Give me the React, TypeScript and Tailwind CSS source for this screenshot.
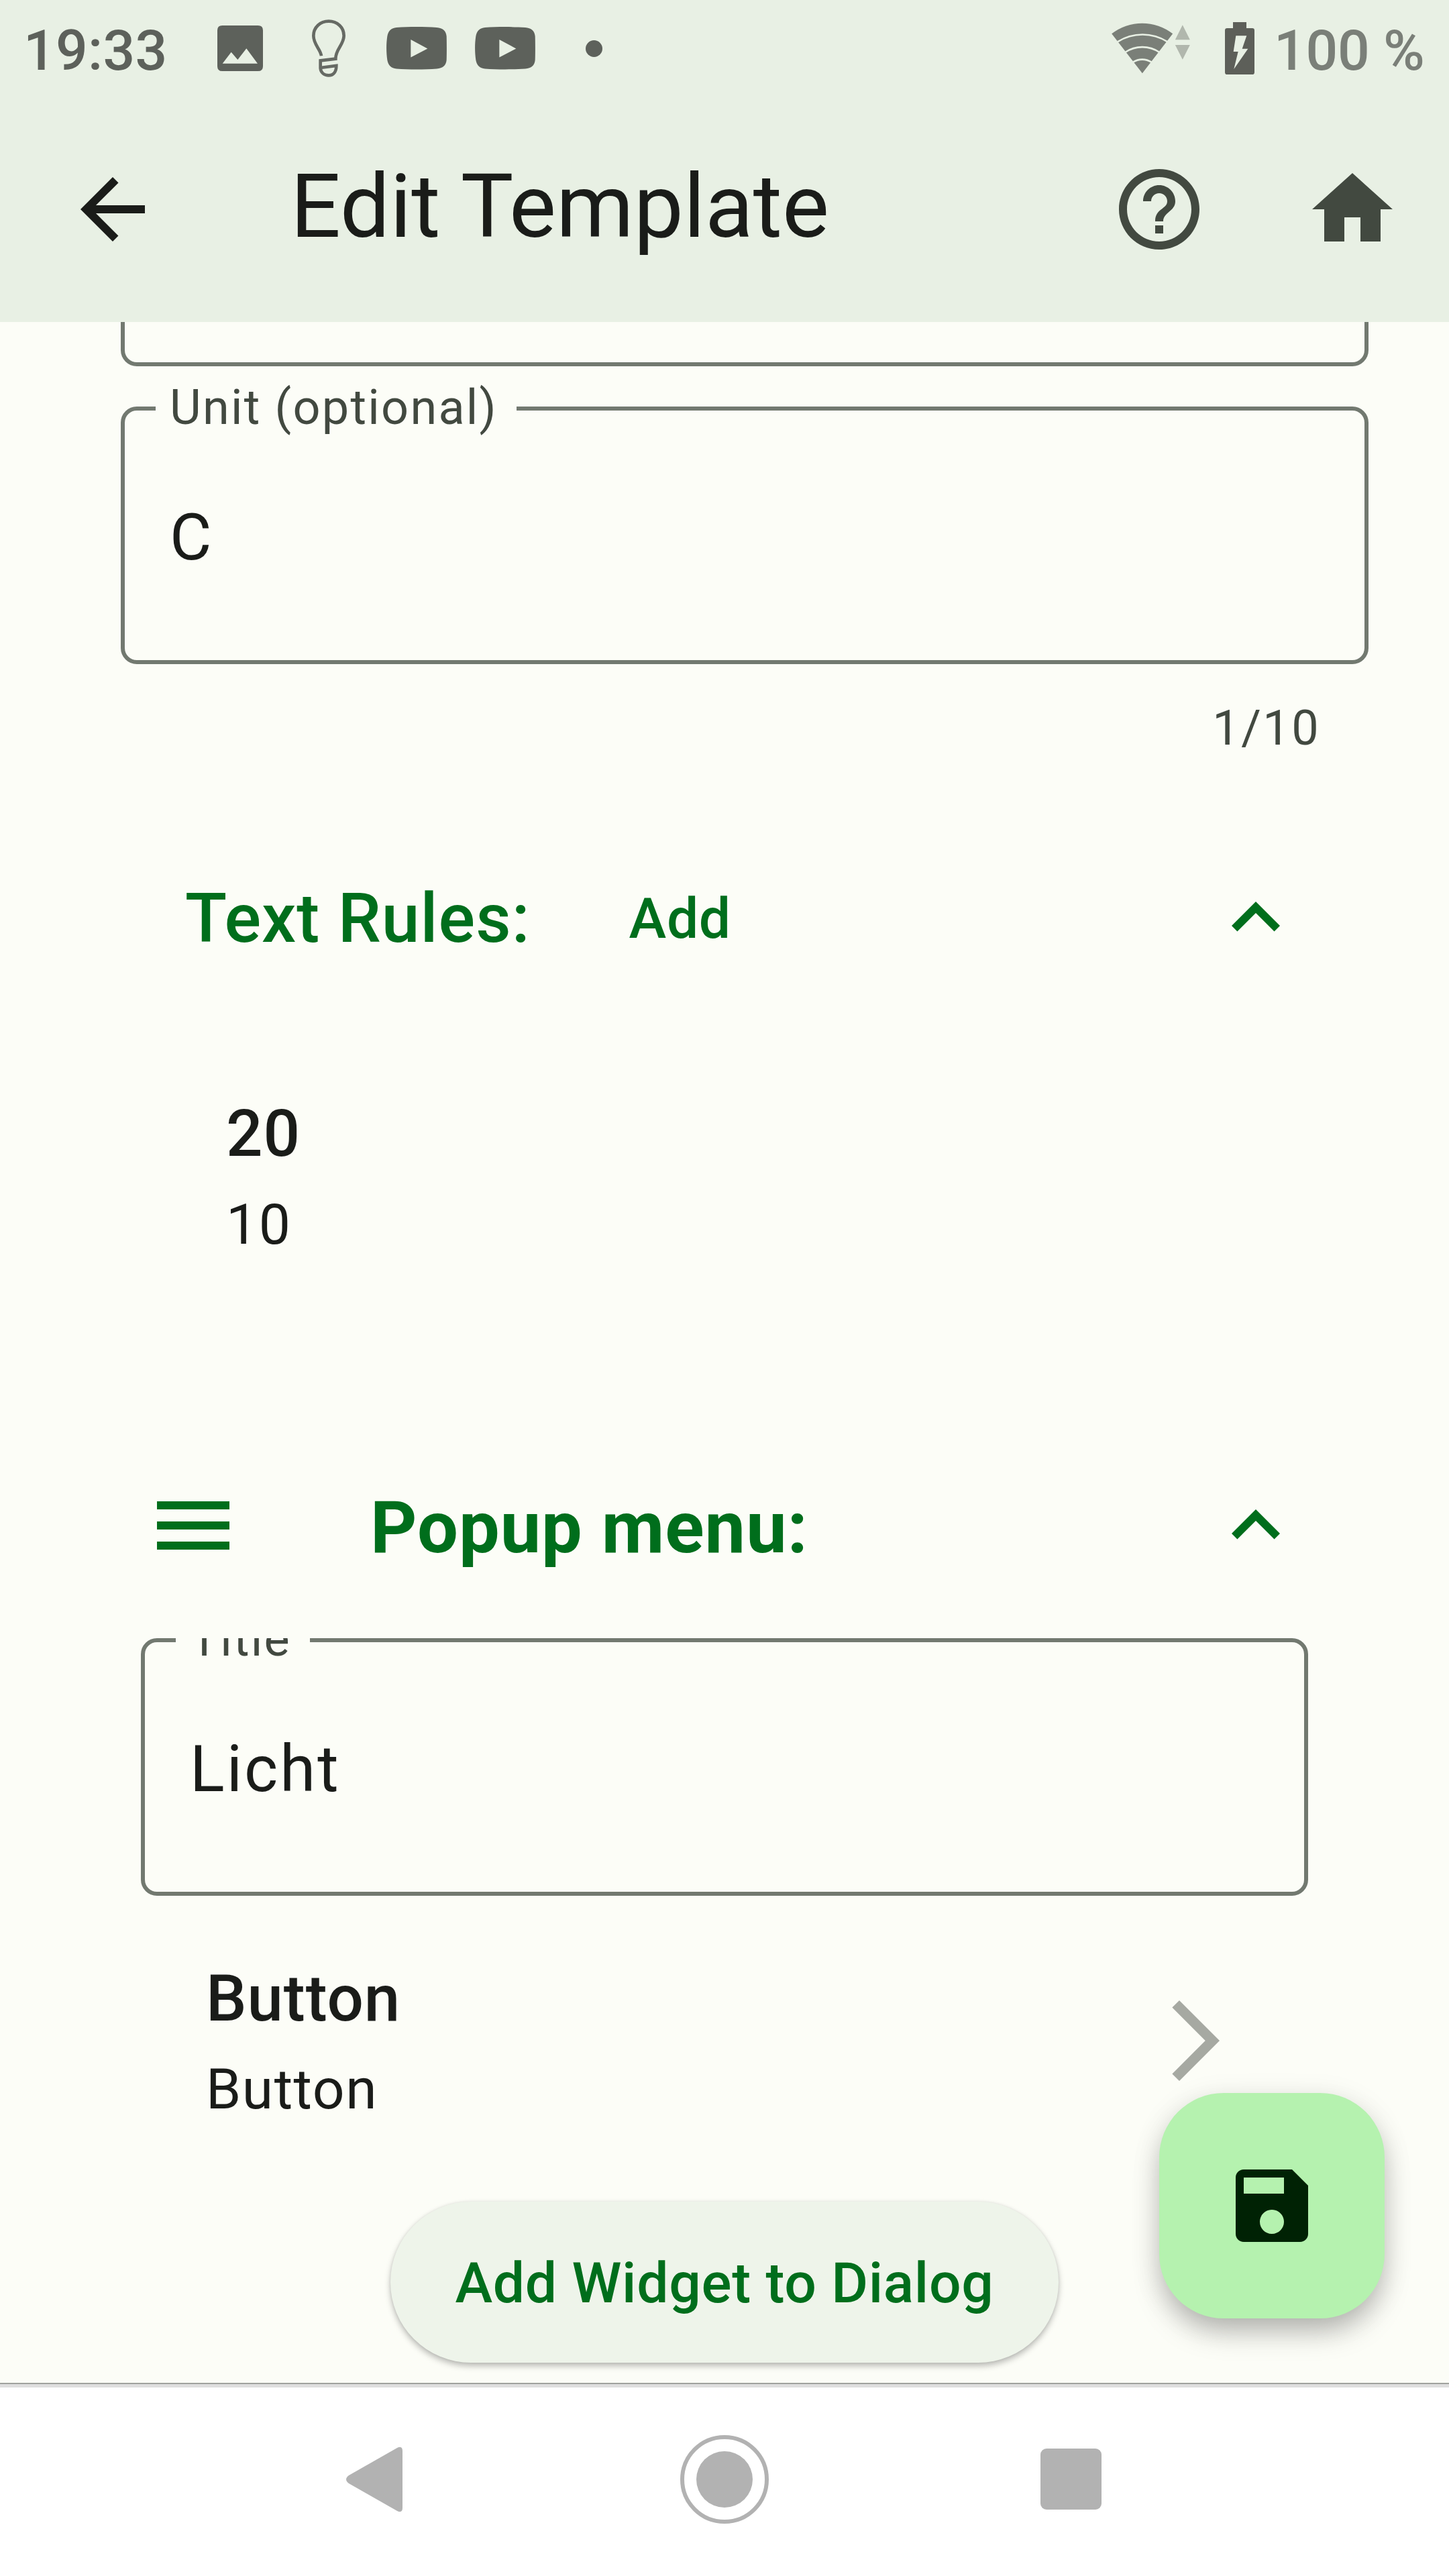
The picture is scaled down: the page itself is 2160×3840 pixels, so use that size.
import React from 'react';

type IconProps = { d: string; className?: string };

/* 24-unit material glyph */
function Icon({ d, className = '' }: IconProps) {
  return (
    <svg viewBox="0 0 24 24" fill="currentColor" className={`size-36 shrink-0 ${className}`}>
      <path d={d} />
    </svg>
  );
}

const ARROW_BACK = 'M20 11H7.83l5.59-5.59L12 4l-8 8 8 8 1.41-1.41L7.83 13H20v-2z';
const HELP =
  'M11 18h2v-2h-2v2zm1-16C6.48 2 2 6.48 2 12s4.48 10 10 10 10-4.48 10-10S17.52 2 12 2zm0 18c-4.41 0-8-3.59-8-8s3.59-8 8-8 8 3.59 8 8-3.59 8-8 8zm0-14c-2.21 0-4 1.79-4 4h2c0-1.1.9-2 2-2s2 .9 2 2c0 2-3 1.75-3 5h2c0-2.25 3-2.5 3-5 0-2.21-1.79-4-4-4z';
const HOME = 'M10 20v-6h4v6h5v-8h3L12 3 2 12h3v8z';
const EXPAND_LESS = 'M12 8l-6 6 1.41 1.41L12 10.83l4.59 4.58L18 14z';
const MENU = 'M3 18h18v-2H3v2zm0-5h18v-2H3v2zm0-7v2h18V6H3z';
const FORWARD = 'M6.23 20.23L8 22l10-10L8 2 6.23 3.77 14.46 12z';
const SAVE =
  'M17 3H5c-1.11 0-2 .9-2 2v14c0 1.1.89 2 2 2h14c1.1 0 2-.9 2-2V7l-4-4zm-5 16c-1.66 0-3-1.34-3-3s1.34-3 3-3 3 1.34 3 3-1.34 3-3 3zm3-10H5V5h10v4z';

function VideoIcon({ className = '' }: { className?: string }) {
  return (
    <svg viewBox="0 0 270 190" className={`h-[63.5px] w-[90px] shrink-0 ${className}`}>
      <path
        fill="#5d615b"
        fillRule="evenodd"
        d="M45 3C100-1 170-1 225 3C252 5 267 18 269 42C270 75 270 115 269 148C267 172 252 185 225 187C170 191 100 191 45 187C22 185 8 172 4 148C-1 115-1 75 4 42C8 18 22 5 45 3ZM109 57V136L184 97Z"
      />
    </svg>
  );
}

function StatusBar() {
  return (
    <div className="flex h-36 items-center pl-[35px] pr-[33px] text-[84px] leading-[98px] font-medium text-[#5d615b]">
      <span className="mt-[7px] w-[289px] tracking-[0.3px]">19:33</span>
      <svg viewBox="0 0 204 204" className="size-[68px]">
        <path
          fill="#5d615b"
          fillRule="evenodd"
          d="M22 0H182Q204 0 204 22V182Q204 204 182 204H22Q0 204 0 182V22Q0 0 22 0ZM23 170H180L130 103L91 153L62 119Z"
        />
      </svg>
      <svg viewBox="495 27 150 258" className="ml-[73px] h-[86px] w-[50px]" fill="none" stroke="#666a64" strokeWidth="14">
        <path d="M537 190C534 160 502 140 502 100C502 62 532 35 570 35C608 35 638 62 638 100C638 140 600 160 601 203L533 211V245C535 265 550 277 570 277C590 277 604 262 604 234L533 243" />
      </svg>
      <VideoIcon className="ml-[61px]" />
      <VideoIcon className="ml-[42px]" />
      <span className="ml-[75px] size-[25px] rounded-full bg-[#5d615b]" />

      <svg viewBox="52 36 350 234" className="mr-[52px] ml-auto h-[78px] w-[117px]">
        <path fill="#7a7f78" d="M189 265L52 88A222 222 0 0 1 325 88Z" />
        <g fill="none" stroke="#e8f0e4" strokeWidth="8">
          <path d="M78 124A209 209 0 0 1 302 124" />
          <path d="M112 171A137 137 0 0 1 266 171" />
          <path d="M147 215A77 77 0 0 1 230 215" />
        </g>
        <path fill="#b1b7ad" d="M369 49L402 115H336ZM336 138H402L369 203Z" />
      </svg>
      <svg viewBox="558 36 132 234" className="h-[78px] w-[44px]">
        <path
          fill="#5d5f59"
          fillRule="evenodd"
          d="M594 36H654V63H680Q690 63 690 73V260Q690 270 680 270H568Q558 270 558 260V73Q558 63 568 63H594ZM607 97L596 168H617L598 246L661 155H635L655 97Z"
        />
      </svg>
      <span className="mt-[7px] ml-[29px] w-[228px] tracking-[-0.3px] whitespace-nowrap text-[#7a7f78]">100 %</span>
    </div>
  );
}

function AppBar() {
  return (
    <div className="flex h-84 items-center pr-[72px] pl-24 text-[#424940]">
      <Icon d={ARROW_BACK} className="text-[#1a1c19]" />
      <h1 className="mb-[8px] ml-[193px] text-[132px] leading-[154px] text-[#1a1c19]">Edit Template</h1>
      <Icon d={HELP} className="ml-auto" />
      <Icon d={HOME} className="ml-36" />
    </div>
  );
}

function OutlinedField({ label, value, notch }: { label: string; value: string; notch: string }) {
  return (
    <div className="relative flex h-96 items-center rounded-3xl border-6 border-[#727970] px-[67px]">
      <span
        className={`absolute top-[-40px] left-[46px] bg-[#fcfdf7] pl-[21px] text-[72px] leading-[72px] tracking-[2.25px] whitespace-nowrap text-[#424940] ${notch}`}
      >
        {label}
      </span>
      <span className="mt-[6px] text-[96px] leading-[112px] tracking-[3px]">{value}</span>
    </div>
  );
}

function NavBar() {
  return (
    <div className="flex h-72 items-center border-t-2 border-[#a0a29e] bg-white pb-[3px] pl-[516px] shadow-[inset_0_5px_0_#dedede]">
      <svg viewBox="0 0 84 98" className="h-[98px] w-[84px]">
        <path fill="#b2b2b2" d="M4 43L76 2Q84-2 84 7V91Q84 100 76 96L4 55Q-4 49 4 43Z" />
      </svg>
      <div className="ml-[414px] flex size-[132px] items-center justify-center rounded-full border-6 border-[#b2b2b2]">
        <span className="size-[84px] rounded-full bg-[#b2b2b2]" />
      </div>
      <span className="ml-[405px] size-[91px] rounded-[9px] bg-[#b2b2b2]" />
    </div>
  );
}

export default function App() {
  return (
    <div className="flex h-[3840px] w-[2160px] flex-col overflow-hidden bg-[#fcfdf7] font-[Roboto,sans-serif] text-[#1a1c19]">
      <header className="h-[480px] shrink-0 bg-[#e8f0e4]">
        <StatusBar />
        <AppBar />
      </header>

      <main className="relative h-[3072px] shrink-0 overflow-hidden">
        <section className="pr-[120px] pl-[180px]">
          <div className="h-[66px] rounded-b-3xl border-6 border-t-0 border-[#727970]" />
          <div className="mt-[60px]">
            <OutlinedField label="Unit (optional)" value="C" notch="w-[538px]" />
          </div>
          <p className="mt-[60px] pr-[72px] text-right text-[72px] leading-[72px] tracking-[2.4px] text-[#424940]">1/10</p>
        </section>

        <section className="pr-[216px] pl-[276px]">
          <div className="mt-[174px] flex h-36 items-center text-[#006e1c]">
            <h2 className="mt-[2px] text-[102px] leading-[120px] font-medium tracking-[1px]">Text Rules:</h2>
            <button className="mt-[3px] ml-[147px] text-[84px] leading-[98px] font-medium tracking-[0.6px]">Add</button>
            <Icon d={EXPAND_LESS} className="ml-auto" />
          </div>
          <div className="mt-[182px] pl-[61px]">
            <p className="text-[96px] leading-[136px] font-medium tracking-[0.9px]">20</p>
            <p className="text-[84px] leading-[136px] tracking-[1.5px]">10</p>
          </div>
        </section>

        <section className="pr-[210px] pl-[210px]">
          <div className="mt-[308px] flex h-36 items-center pr-[6px] pl-[6px] text-[#006e1c]">
            <Icon d={MENU} />
            <h2 className="mt-[5px] ml-48 text-[108px] leading-[126px] font-bold tracking-[1px]">Popup menu:</h2>
            <Icon d={EXPAND_LESS} className="ml-auto" />
          </div>
          <div className="mt-24 overflow-hidden">
            <OutlinedField label="Title" value="Licht" notch="w-[200px]" />
          </div>
          <div className="mt-[85px] flex justify-between pr-24 pl-[97px]">
            <div>
              <p className="text-[96px] leading-[136px] font-medium tracking-[0.9px]">Button</p>
              <p className="text-[84px] leading-[136px] tracking-[1.5px]">Button</p>
            </div>
            <Icon d={FORWARD} className="mt-[59px] text-[#a6a9a2]" />
          </div>
          <button className="mx-auto mt-[99px] flex h-60 w-[996px] items-center justify-center rounded-full bg-[#eef4ea] pt-[3px] text-[84px] leading-[98px] font-medium tracking-[0.7px] whitespace-nowrap text-[#006e1c] shadow-[0_5px_10px_rgba(0,0,0,0.26),0_0_4px_rgba(0,0,0,0.08)]">
            Add Widget to Dialog
          </button>
        </section>

        <button className="absolute right-24 bottom-24 flex size-84 items-center justify-center rounded-[96px] bg-[#b5f2af] text-[#002204] shadow-[0_24px_44px_-6px_rgba(0,0,0,0.26),0_8px_44px_rgba(0,0,0,0.1)]">
          <Icon d={SAVE} />
        </button>
      </main>

      <NavBar />
    </div>
  );
}
